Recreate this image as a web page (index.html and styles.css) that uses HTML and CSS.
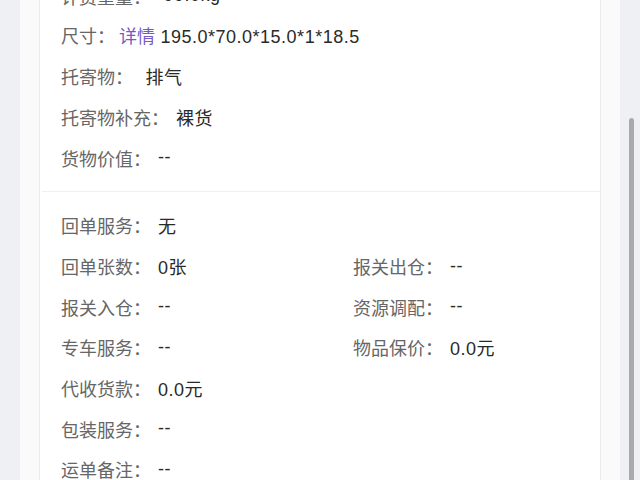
FILE: index.html
```html
<!DOCTYPE html>
<html lang="zh-CN">
<head>
  <meta charset="UTF-8" />
  <meta name="viewport" content="width=device-width, initial-scale=1.0" />
  <title>运单详情</title>
  <link rel="stylesheet" href="styles.css">
</head>
<body>
  <div class="page">
    <div class="card">
      <div class="section">
        <div class="row first"><span class="label">计费重量：</span><span class="value"> 99.0kg</span></div>
        <div class="row"><span class="label">尺寸：</span><span class="value tight"><span class="link">详情</span> 195.0*70.0*15.0*1*18.5</span></div>
        <div class="row"><span class="label">托寄物：</span><span class="value"> 排气</span></div>
        <div class="row"><span class="label">托寄物补充：</span><span class="value">裸货</span></div>
        <div class="row"><span class="label">货物价值：</span><span class="value">--</span></div>
      </div>
      <div class="divider"></div>
      <div class="section grid">
        <div class="row full"><span class="label">回单服务：</span><span class="value">无</span></div>
        <div class="row"><span class="label">回单张数：</span><span class="value">0张</span></div>
        <div class="row"><span class="label">报关出仓：</span><span class="value">--</span></div>
        <div class="row"><span class="label">报关入仓：</span><span class="value">--</span></div>
        <div class="row"><span class="label">资源调配：</span><span class="value">--</span></div>
        <div class="row"><span class="label">专车服务：</span><span class="value">--</span></div>
        <div class="row"><span class="label">物品保价：</span><span class="value">0.0元</span></div>
        <div class="row full"><span class="label">代收货款：</span><span class="value">0.0元</span></div>
        <div class="row full"><span class="label">包装服务：</span><span class="value">--</span></div>
        <div class="row full"><span class="label">运单备注：</span><span class="value">--</span></div>
      </div>
    </div>
  </div>
  <div class="scroll-thumb"></div>
</body>
</html>
```

FILE: styles.css
```css
body {
  margin: 0;
  height: 100vh;
  overflow: hidden;
  background: #eff0f4;
  font-family: "Liberation Sans", "Noto Sans CJK SC", sans-serif;
  font-size: 18px;
}
.page {
  margin: 0 20px;
  padding: 0 19px;
  min-height: 100vh;
  background: #fafafb;
}
.card {
  margin-top: -33px;
  padding-top: 10px;
  background: white;
  border-left: 1px solid #ececee;
  border-right: 1px solid #ececee;
}
.section {
  padding: 0 21px 13px 21px;
}
.row {
  height: 41px;
  display: flex;
  align-items: center;
  white-space: pre;
}
.row.first {
  height: 37px;
}
.grid {
  display: grid;
  grid-template-columns: 292px 1fr;
  grid-auto-rows: 40.7px;
  padding-top: 13px;
}
.grid .row {
  height: auto;
}
.full {
  grid-column: 1 / 3;
}
.label {
  color: #666;
}
.value {
  color: #2a2a2a;
  margin-left: 7px;
  letter-spacing: 0.5px;
}
.value.tight {
  margin-left: 4px;
}
.link {
  color: #7659c4;
  letter-spacing: 0;
}
.divider {
  height: 1px;
  margin-left: 2px;
  background: #f0f0f2;
}
.scroll-thumb {
  position: absolute;
  left: 629px;
  top: 118px;
  width: 5px;
  height: 380px;
  border-radius: 3px;
  background: #a9a9ae;
}
```
